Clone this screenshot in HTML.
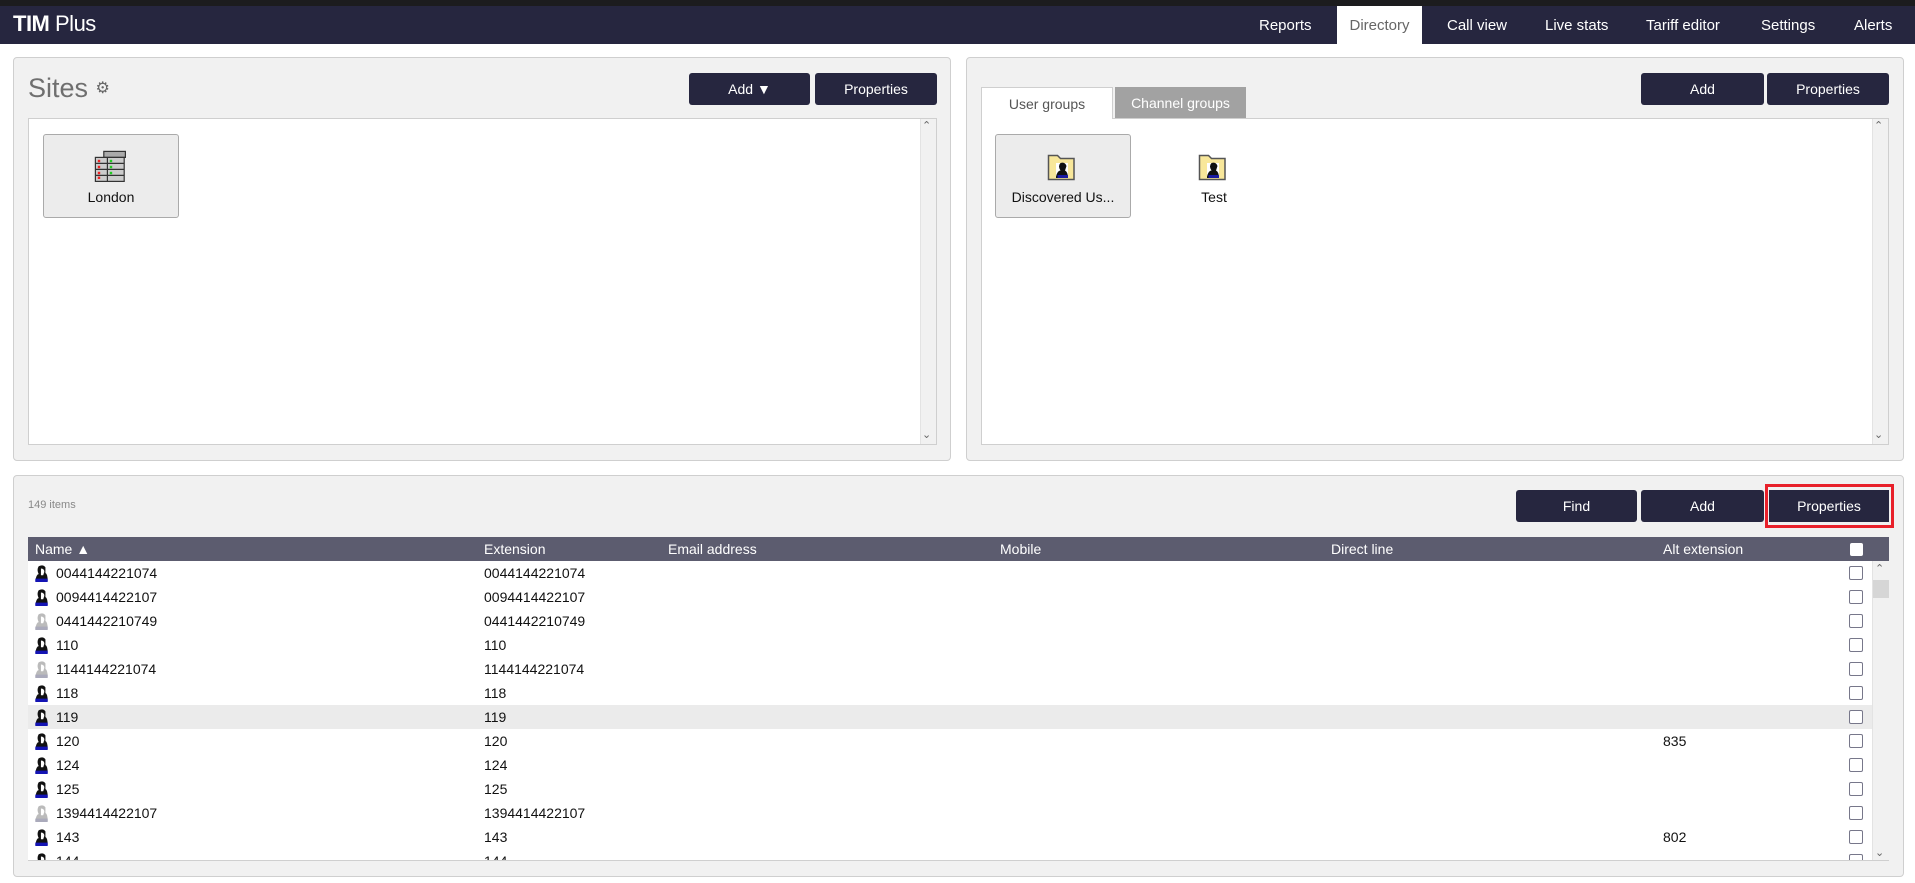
<!DOCTYPE html>
<html><head><meta charset="utf-8"><style>
*{box-sizing:border-box;margin:0;padding:0}
body{width:1915px;height:883px;overflow:hidden;background:#fff;font-family:"Liberation Sans",sans-serif;position:relative;color:#111}
.a{position:absolute}
.top{left:0;top:0;width:1915px;height:6px;background:#1c1c1e}
.nav{left:0;top:6px;width:1915px;height:38px;background:#26263f}
.logo{left:13px;top:11px;color:#fff;font-size:22px;letter-spacing:-0.5px}
.ni{top:6px;height:38px;line-height:40px;color:#fff;font-size:15px}
.panel{background:#f1f1f1;border:1px solid #cfcfcf;border-radius:4px}
.btn{background:#26263f;color:#fff;font-size:14px;text-align:center;border-radius:3px}
.box{background:#fff;border:1px solid #cfcfcf}
.sb{background:#f1f1f1;border-left:1px solid #e3e3e3}
.tile{border:1px solid #aaa;border-radius:3px;background:#ececec;font-size:14px;text-align:center}
.row{left:28px;width:1844px;height:24px;font-size:14px;line-height:25px}
.row span{position:absolute}
.cb{position:absolute;left:1821px;top:5px;width:14px;height:14px;border:1.5px solid #77778a;border-radius:2px;background:#fff}
.hd{left:28px;top:537px;width:1861px;height:24px;background:#5c5c6f;color:#fff;font-size:14px;line-height:25px}
.hd span{position:absolute}
.ic{position:absolute;left:6px;top:3px}
</style></head><body>
<svg width="0" height="0" style="position:absolute"><defs>
<symbol id="pk" viewBox="0 0 13 16"><path d="M1 15Q2 9 4 9Q2 5 4 2Q8 0 10 3L10 8Q12 9 12 15Z" fill="#111"/><path d="M6 4Q9 4 9 7L8 10H6Z" fill="#fff"/><rect x="1" y="13" width="11" height="3" fill="#1414b4"/></symbol>
<symbol id="pg" viewBox="0 0 13 16"><path d="M1 15Q2 9 4 9Q2 5 4 2Q8 0 10 3L10 8Q12 9 12 15Z" fill="#bbb"/><path d="M6 4Q9 4 9 7L8 10H6Z" fill="#fff"/><rect x="1" y="13" width="11" height="3" fill="#aab"/></symbol>
<symbol id="fd" viewBox="0 0 20 20"><path d="M1 3H7L9 5H18V19H1Z" fill="#f8e79a" stroke="#555"/><rect x="6" y="8" width="8" height="10" fill="#fff"/><path d="M6 17Q7 13 9 13Q7 10 9 8Q12 7 13 10L12 13Q14 14 14 18H6Z" fill="#111"/><rect x="7" y="16" width="7" height="2" fill="#1a1aa0"/></symbol>
</defs></svg>
<div class="a top"></div>
<div class="a nav"></div>
<div class="a logo"><b>TIM</b> Plus</div>
<div class="a ni" style="left:1259px">Reports</div>
<div class="a ni" style="left:1337px;width:85px;background:#fff;color:#666;text-align:center">Directory</div>
<div class="a ni" style="left:1447px">Call view</div>
<div class="a ni" style="left:1545px">Live stats</div>
<div class="a ni" style="left:1646px">Tariff editor</div>
<div class="a ni" style="left:1761px">Settings</div>
<div class="a ni" style="left:1854px">Alerts</div>

<div class="a panel" style="left:13px;top:57px;width:938px;height:404px"></div>
<div class="a" style="left:28px;top:73px;font-size:27px;color:#6f6f6f">Sites <span style="font-size:16px;color:#666;position:relative;top:-4px">&#9881;</span></div>
<div class="a btn" style="left:689px;top:73px;width:121px;height:32px;line-height:32px">Add &#9660;</div>
<div class="a btn" style="left:815px;top:73px;width:122px;height:32px;line-height:32px">Properties</div>
<div class="a box" style="left:28px;top:118px;width:909px;height:327px"></div>
<div class="a sb" style="left:920px;top:119px;width:16px;height:325px"></div>
<div class="a" style="left:922px;top:119px;font-size:11px;color:#666">&#8963;</div>
<div class="a" style="left:922px;top:428px;font-size:11px;color:#666">&#8964;</div>
<div class="a tile" style="left:43px;top:134px;width:136px;height:84px"></div>
<svg class="a" style="left:93px;top:150px" width="36" height="34" viewBox="0 0 30 28"><rect x="9" y="1" width="18" height="5" fill="#aaa" stroke="#333"/><rect x="2" y="6" width="24" height="20" fill="#ccc" stroke="#333"/><g fill="#e22"><rect x="4" y="8" width="2" height="2"/><rect x="4" y="13" width="2" height="2"/><rect x="4" y="18" width="2" height="2"/><rect x="4" y="22" width="2" height="2"/></g><g fill="#2c2"><rect x="14" y="8" width="2" height="2"/><rect x="14" y="13" width="2" height="2"/><rect x="14" y="18" width="2" height="2"/></g><path d="M2 11H26M2 16H26M2 21H26M12 6V26" stroke="#333"/></svg>
<div class="a" style="left:43px;top:189px;width:136px;text-align:center;font-size:14px">London</div>

<div class="a panel" style="left:966px;top:57px;width:938px;height:404px"></div>
<div class="a btn" style="left:1641px;top:73px;width:123px;height:32px;line-height:32px">Add</div>
<div class="a btn" style="left:1767px;top:73px;width:122px;height:32px;line-height:32px">Properties</div>
<div class="a box" style="left:981px;top:118px;width:908px;height:327px"></div>
<div class="a" style="left:981px;top:87px;width:132px;height:32px;background:#fff;border:1px solid #cfcfcf;border-bottom:none;font-size:14px;color:#555;text-align:center;line-height:32px">User groups</div>
<div class="a" style="left:1115px;top:87px;width:131px;height:31px;background:#a2a2a2;font-size:14px;color:#fff;text-align:center;line-height:32px">Channel groups</div>
<div class="a sb" style="left:1872px;top:119px;width:16px;height:325px"></div>
<div class="a" style="left:1874px;top:119px;font-size:11px;color:#666">&#8963;</div>
<div class="a" style="left:1874px;top:428px;font-size:11px;color:#666">&#8964;</div>
<div class="a tile" style="left:995px;top:134px;width:136px;height:84px"></div>
<svg class="a" style="left:1047px;top:151px" width="30" height="30"><use href="#fd"/></svg>
<div class="a" style="left:995px;top:189px;width:136px;text-align:center;font-size:14px">Discovered Us...</div>
<svg class="a" style="left:1198px;top:151px" width="30" height="30"><use href="#fd"/></svg>
<div class="a" style="left:1146px;top:189px;width:136px;text-align:center;font-size:14px">Test</div>

<div class="a panel" style="left:13px;top:475px;width:1891px;height:402px"></div>
<div class="a" style="left:28px;top:499px;font-size:11px;color:#888">149 items</div>
<div class="a btn" style="left:1516px;top:490px;width:121px;height:32px;line-height:32px">Find</div>
<div class="a btn" style="left:1641px;top:490px;width:123px;height:32px;line-height:32px">Add</div>
<div class="a btn" style="left:1769px;top:490px;width:120px;height:32px;line-height:32px;border-radius:0">Properties</div>
<div class="a" style="left:1765px;top:484px;width:129px;height:44px;border:3px solid #e8202a"></div>
<div class="a" style="left:28px;top:561px;width:1861px;height:300px;background:#fff;border-bottom:1px solid #cfcfcf"></div>
<div class="a hd"><span style="left:7px">Name &#9650;</span><span style="left:456px">Extension</span><span style="left:640px">Email address</span><span style="left:972px">Mobile</span><span style="left:1303px">Direct line</span><span style="left:1635px">Alt extension</span><span style="left:1822px;top:6px;width:13px;height:13px;background:#fff;border-radius:2px"></span></div>
<div class="a sb" style="left:1872px;top:561px;width:17px;height:299px"></div>
<div class="a" style="left:1873px;top:580px;width:16px;height:18px;background:#d6d6d6"></div>
<div class="a" style="left:1875px;top:562px;font-size:11px;color:#666">&#8963;</div>
<div class="a" style="left:1875px;top:846px;font-size:11px;color:#666">&#8964;</div>
<div class="a" style="left:28px;top:561px;width:1844px;height:299px;overflow:hidden">
<div style="position:relative">
<div class="a row" style="left:0;top:0"><svg class="ic" width="15" height="18"><use href="#pk"/></svg><span style="left:28px">0044144221074</span><span style="left:456px">0044144221074</span><i class="cb"></i></div>
<div class="a row" style="left:0;top:24px"><svg class="ic" width="15" height="18"><use href="#pk"/></svg><span style="left:28px">0094414422107</span><span style="left:456px">0094414422107</span><i class="cb"></i></div>
<div class="a row" style="left:0;top:48px"><svg class="ic" width="15" height="18"><use href="#pg"/></svg><span style="left:28px">0441442210749</span><span style="left:456px">0441442210749</span><i class="cb"></i></div>
<div class="a row" style="left:0;top:72px"><svg class="ic" width="15" height="18"><use href="#pk"/></svg><span style="left:28px">110</span><span style="left:456px">110</span><i class="cb"></i></div>
<div class="a row" style="left:0;top:96px"><svg class="ic" width="15" height="18"><use href="#pg"/></svg><span style="left:28px">1144144221074</span><span style="left:456px">1144144221074</span><i class="cb"></i></div>
<div class="a row" style="left:0;top:120px"><svg class="ic" width="15" height="18"><use href="#pk"/></svg><span style="left:28px">118</span><span style="left:456px">118</span><i class="cb"></i></div>
<div class="a row" style="left:0;top:144px;background:#ebebeb"><svg class="ic" width="15" height="18"><use href="#pk"/></svg><span style="left:28px">119</span><span style="left:456px">119</span><i class="cb"></i></div>
<div class="a row" style="left:0;top:168px"><svg class="ic" width="15" height="18"><use href="#pk"/></svg><span style="left:28px">120</span><span style="left:456px">120</span><span style="left:1635px">835</span><i class="cb"></i></div>
<div class="a row" style="left:0;top:192px"><svg class="ic" width="15" height="18"><use href="#pk"/></svg><span style="left:28px">124</span><span style="left:456px">124</span><i class="cb"></i></div>
<div class="a row" style="left:0;top:216px"><svg class="ic" width="15" height="18"><use href="#pk"/></svg><span style="left:28px">125</span><span style="left:456px">125</span><i class="cb"></i></div>
<div class="a row" style="left:0;top:240px"><svg class="ic" width="15" height="18"><use href="#pg"/></svg><span style="left:28px">1394414422107</span><span style="left:456px">1394414422107</span><i class="cb"></i></div>
<div class="a row" style="left:0;top:264px"><svg class="ic" width="15" height="18"><use href="#pk"/></svg><span style="left:28px">143</span><span style="left:456px">143</span><span style="left:1635px">802</span><i class="cb"></i></div>
<div class="a row" style="left:0;top:288px"><svg class="ic" width="15" height="18"><use href="#pk"/></svg><span style="left:28px">144</span><span style="left:456px">144</span><i class="cb"></i></div>
</div></div>
</body></html>
